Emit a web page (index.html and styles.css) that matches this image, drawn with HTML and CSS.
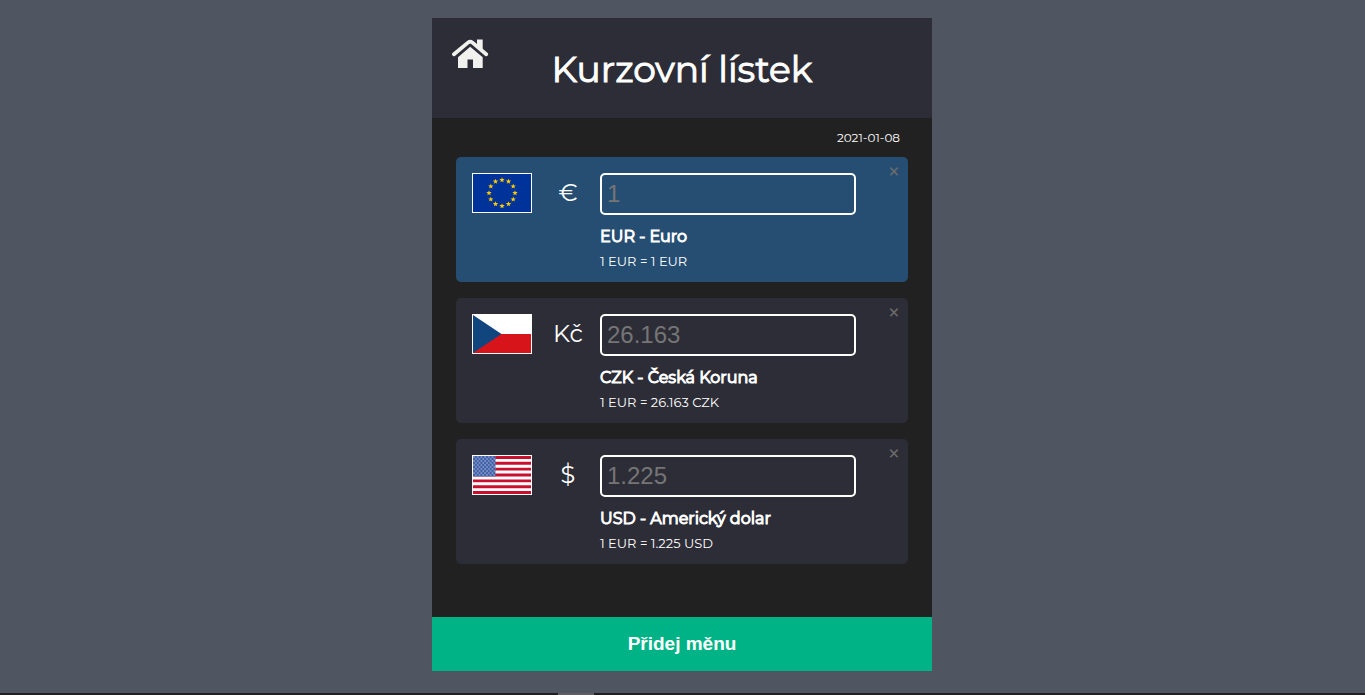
FILE: index.html
```html
<!DOCTYPE html>
<html lang="cs">
<head>
<meta charset="utf-8">
<meta name="viewport" content="width=device-width, initial-scale=1">
<title>Kurzovní lístek</title>
<link rel="stylesheet" href="styles.css">
</head>
<body>
<main class="container">
  <header class="header">
    <a class="home" href="#" aria-label="Domů">
      <svg viewBox="0 0 37 29" width="37" height="29" aria-hidden="true">
        <path d="M2 15.3 16.2 3.4Q18.2 1.9 20.2 3.4L34.2 15.3" fill="none" stroke="currentColor" stroke-width="3.8" stroke-linecap="round"/>
        <path d="M25 .6H30.7V11L25 6.4Z" fill="currentColor"/>
        <path d="M18.2 7.7 30.7 18.2V29H21V20.5H15.5V29H6V18.2Z" fill="currentColor"/>
      </svg>
    </a>
    <h1 class="title">Kurzovní lístek</h1>
  </header>

  <section class="content">
    <p class="date">2021-01-08</p>
    <ul class="currencies">
      <li class="card card-base">
        <svg class="flag" viewBox="0 0 58 38" aria-hidden="true">
          <defs><path id="star" d="M0-2.8.7-.9 2.7-.9 1.1.4 1.7 2.3 0 1.2-1.7 2.3-1.1.4-2.7-.9-.7-.9Z"/></defs>
          <rect width="58" height="38" fill="#039"/>
          <g fill="#fc0">
            <use href="#star" x="29" y="6"/><use href="#star" x="35.5" y="7.5"/>
            <use href="#star" x="40.2" y="12.3"/><use href="#star" x="42" y="19"/>
            <use href="#star" x="40.2" y="25.3"/><use href="#star" x="35.5" y="30"/>
            <use href="#star" x="29" y="32"/><use href="#star" x="22.5" y="30"/>
            <use href="#star" x="17.8" y="25.3"/><use href="#star" x="16" y="19"/>
            <use href="#star" x="17.8" y="12.3"/><use href="#star" x="22.5" y="7.5"/>
          </g>
        </svg>
        <span class="symbol">€</span>
        <div class="info">
          <input class="amount" id="eur" type="text" placeholder="1">
          <label class="name" for="eur">EUR - Euro</label>
          <p class="rate">1 EUR = 1 EUR</p>
        </div>
        <button class="close" type="button" aria-label="Odebrat EUR">×</button>
      </li>
      <li class="card">
        <svg class="flag" viewBox="0 0 58 38" aria-hidden="true">
          <rect width="58" height="38" fill="#fff"/>
          <path d="M0 19H58V38H0Z" fill="#d7141a"/>
          <path d="M0 0 28.5 19 0 38Z" fill="#11457e"/>
        </svg>
        <span class="symbol">Kč</span>
        <div class="info">
          <input class="amount" id="czk" type="text" placeholder="26.163">
          <label class="name" for="czk">CZK - Česká Koruna</label>
          <p class="rate">1 EUR = 26.163 CZK</p>
        </div>
        <button class="close" type="button" aria-label="Odebrat CZK">×</button>
      </li>
      <li class="card">
        <svg class="flag" viewBox="0 0 58 38" preserveAspectRatio="none" aria-hidden="true">
          <defs>
            <pattern id="stars" width="3.7" height="4" patternUnits="userSpaceOnUse">
              <circle cx="1" cy="1" r=".75" fill="#fff"/><circle cx="2.85" cy="3" r=".75" fill="#fff"/>
            </pattern>
          </defs>
          <rect width="58" height="38" fill="#fff"/>
          <path d="M0 1.46H58M0 7.31H58M0 13.15H58M0 19H58M0 24.85H58M0 30.69H58M0 36.54H58" stroke="#c8102e" stroke-width="2.92"/>
          <rect width="22.5" height="20.46" fill="#3f5fa8"/>
          <rect width="22.5" height="20.46" fill="url(#stars)" opacity=".65"/>
        </svg>
        <span class="symbol">$</span>
        <div class="info">
          <input class="amount" id="usd" type="text" placeholder="1.225">
          <label class="name" for="usd">USD - Americký dolar</label>
          <p class="rate">1 EUR = 1.225 USD</p>
        </div>
        <button class="close" type="button" aria-label="Odebrat USD">×</button>
      </li>
    </ul>
  </section>

  <button class="add" type="button">Přidej měnu</button>
</main>
<footer class="edge"><span class="edge-tab"></span></footer>
</body>
</html>
```
FILE: styles.css
```css
* {
  box-sizing: border-box;
  margin: 0;
  padding: 0;
}

body {
  min-height: 100vh;
  display: flex;
  flex-direction: column;
  background: #4f5561;
  color: #fff;
  font-family: Montserrat, Inter, sans-serif;
}

.container {
  width: 100%;
  max-width: 500px;
  margin: 18px 1px 22px 0;
  align-self: center;
  flex: 1;
  display: flex;
  flex-direction: column;
  background: #212121;
}

.header {
  display: grid;
  grid-template-columns: 80px 1fr 80px;
  padding: 21px 20px 19px;
  height: 100px;
  background: #2d2d37;
}

.home {
  color: #f1f1ee;
}

.home svg {
  display: block;
}

.title {
  align-self: center;
  text-align: center;
  white-space: nowrap;
  font-size: 36px;
  line-height: 60px;
  font-weight: 400;
  -webkit-text-stroke: 1px currentColor;
}

.content {
  flex: 1;
  padding: 8px 24px 24px;
}

.date {
  padding-right: 8px;
  text-align: right;
  font-size: 12px;
  line-height: 24px;
}

.currencies {
  display: grid;
  gap: 16px;
  margin-top: 7px;
  list-style: none;
}

.card {
  position: relative;
  display: grid;
  grid-template-columns: 64px 64px 1fr;
  padding: 16px 52px 10px 16px;
  border-radius: 5px;
  background: #2d2d37;
}

.card-base {
  background: #264e73;
}

.flag {
  width: 60px;
  height: 40px;
  border: 1px solid #fff;
}

.symbol {
  text-align: center;
  font-size: 24px;
  line-height: 40px;
}

.amount {
  display: block;
  width: 100%;
  height: 42px;
  padding: 0 5px;
  border: 2px solid #fff;
  border-radius: 5px;
  background: transparent;
  color: #fff;
  font: 24px "Liberation Sans", Arial, sans-serif;
}

.amount::placeholder {
  color: #757575;
}

.name {
  display: block;
  margin-top: 9px;
  font-size: 16px;
  line-height: 26px;
  font-weight: 400;
  -webkit-text-stroke: 1px currentColor;
}

.rate {
  font-size: 13px;
  line-height: 22px;
}

.close {
  position: absolute;
  top: 5px;
  right: 4px;
  width: 20px;
  height: 20px;
  border: 0;
  background: none;
  color: #6b6b6b;
  font: 24px/20px Montserrat, Inter, sans-serif;
}

.add {
  height: 54px;
  border: 0;
  background: #00b386;
  color: #fff;
  font: bold 19px "Liberation Sans", Arial, sans-serif;
}

.edge {
  display: flex;
  justify-content: center;
  height: 2px;
  padding-right: 213px;
  background: #211e20;
}

.edge-tab {
  width: 36px;
  background: #615e61;
}
```
